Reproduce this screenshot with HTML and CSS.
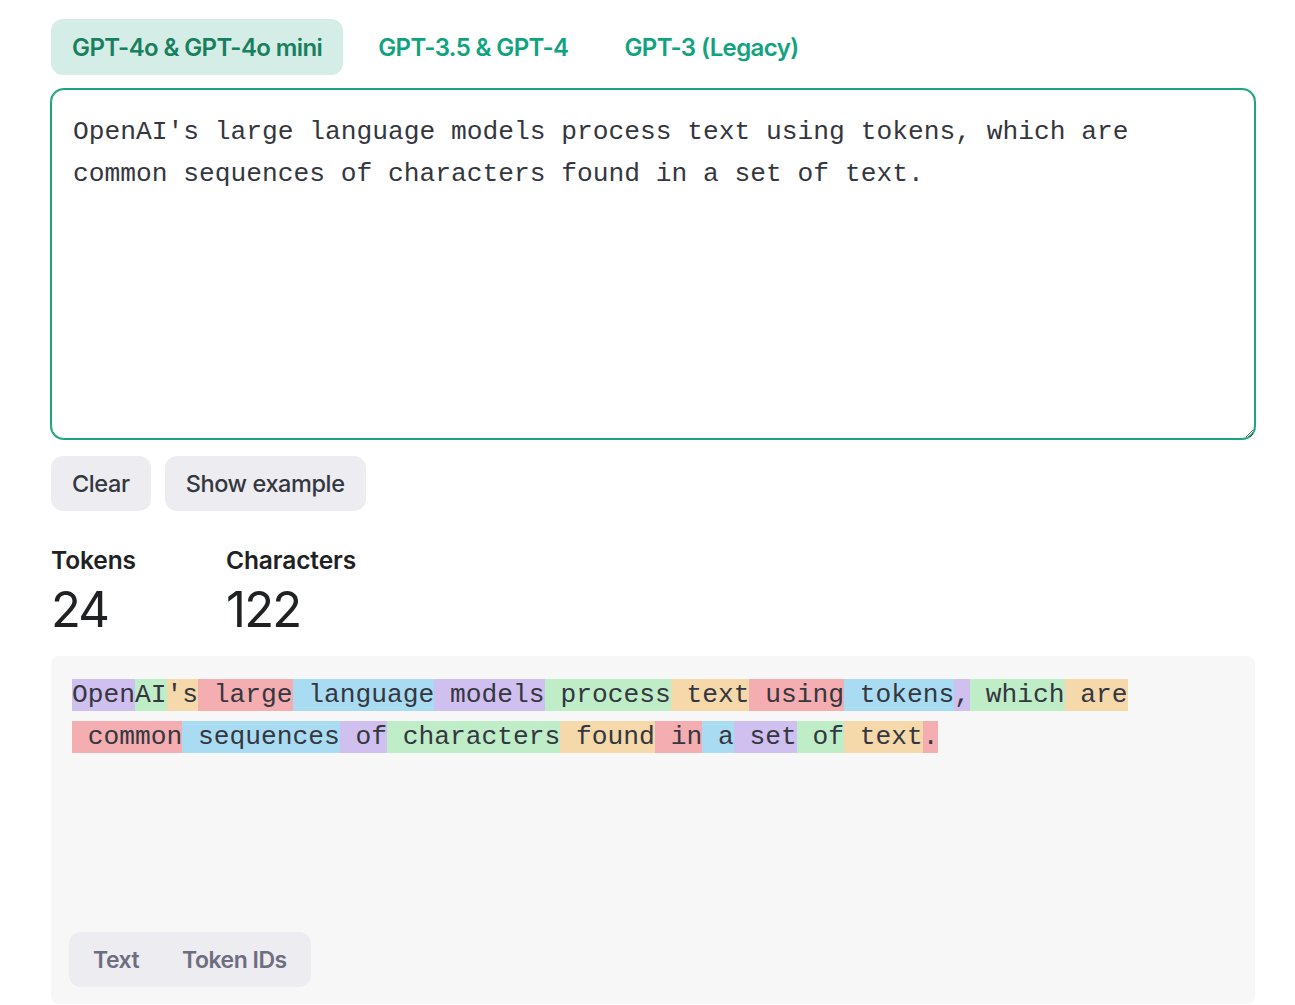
FILE: index.html
```html
<!DOCTYPE html>
<html lang="en">
<head>
<meta charset="utf-8">
<title>Tokenizer</title>
<link rel="stylesheet" href="styles.css">
</head>
<body>
<main class="page">
  <nav class="tabs">
    <button class="tab tab-active">GPT-4o &amp; GPT-4o mini</button>
    <button class="tab">GPT-3.5 &amp; GPT-4</button>
    <button class="tab">GPT-3 (Legacy)</button>
  </nav>

  <textarea class="input" spellcheck="false">OpenAI's large language models process text using tokens, which are common sequences of characters found in a set of text.</textarea>

  <div class="actions">
    <button class="btn">Clear</button>
    <button class="btn">Show example</button>
  </div>

  <section class="stats">
    <div class="stat">
      <div class="stat-label">Tokens</div>
      <div class="stat-value">24</div>
    </div>
    <div class="stat">
      <div class="stat-label">Characters</div>
      <div class="stat-value">122</div>
    </div>
  </section>

  <section class="output">
    <div class="tokens">
      <div class="token-line"><span class="t t-purple">Open</span><span class="t t-green">AI</span><span class="t t-orange">'s</span><span class="t t-red"> large</span><span class="t t-blue"> language</span><span class="t t-purple"> models</span><span class="t t-green"> process</span><span class="t t-orange"> text</span><span class="t t-red"> using</span><span class="t t-blue"> tokens</span><span class="t t-purple">,</span><span class="t t-green"> which</span><span class="t t-orange"> are</span></div>
      <div class="token-line"><span class="t t-red"> common</span><span class="t t-blue"> sequences</span><span class="t t-purple"> of</span><span class="t t-green"> characters</span><span class="t t-orange"> found</span><span class="t t-red"> in</span><span class="t t-blue"> a</span><span class="t t-purple"> set</span><span class="t t-green"> of</span><span class="t t-orange"> text</span><span class="t t-red">.</span></div>
    </div>
    <div class="toggle">
      <button class="toggle-btn">Text</button>
      <button class="toggle-btn">Token IDs</button>
    </div>
  </section>
</main>
</body>
</html>
```

FILE: styles.css
```css
* {
  box-sizing: border-box;
}

html, body {
  margin: 0;
  padding: 0;
  background: #ffffff;
}

body {
  font-family: Inter, "Noto Sans", "Liberation Sans", sans-serif;
  color: #202123;
}

button {
  font-family: inherit;
  border: none;
  cursor: pointer;
}

.page {
  padding: 19px 40px 0 51px;
}

/* Tabs */
.tabs {
  display: flex;
  gap: 14px;
}

.tab {
  height: 56px;
  padding: 0 21px;
  border-radius: 12px;
  background: transparent;
  color: #10a37f;
  font-size: 24px;
  font-weight: 600;
  letter-spacing: -0.6px;
}

.tab-active {
  background: #d4ede6;
  color: #1a7f5e;
}

/* Input */
.input {
  display: block;
  width: 100%;
  height: 350px;
  margin-top: 14px;
  padding: 21px 21px 19px;
  border: 1px solid #1fa57e;
  box-shadow: 0 0 0 1px #1fa57e;
  border-radius: 13px;
  outline: none;
  resize: both;
  font-family: "Liberation Mono", "DejaVu Sans Mono", monospace;
  font-size: 26.25px;
  line-height: 42px;
  color: #353740;
  background: #ffffff;
}

/* Buttons */
.actions {
  display: flex;
  gap: 14px;
  margin-top: 17px;
}

.btn {
  height: 55px;
  padding: 0 21px;
  border-radius: 12px;
  background: #ececf1;
  color: #353740;
  font-size: 23.5px;
  font-weight: 500;
  letter-spacing: -0.4px;
}

/* Stats */
.stats {
  display: grid;
  grid-template-columns: 175px auto;
  margin-top: 34px;
}

.stat-label {
  font-size: 24.5px;
  line-height: 30px;
  font-weight: 600;
  letter-spacing: -0.1px;
  color: #202123;
}

.stat-value {
  margin-top: 7px;
  font-size: 49px;
  line-height: 56px;
  font-weight: 400;
  letter-spacing: -1.8px;
  color: #202123;
}

/* Output */
.output {
  display: flex;
  flex-direction: column;
  height: 348px;
  margin-top: 18px;
  background: #f7f7f8;
  border-radius: 8px;
}

.tokens {
  flex: 1;
  padding: 18px 21px 0;
  font-family: "Liberation Mono", "DejaVu Sans Mono", monospace;
  font-size: 26.25px;
  line-height: 42px;
  color: #353740;
}

.token-line {
  white-space: pre;
}

.t {
  padding: 1px 0;
}

.t-purple { background: #d0c0ef; }
.t-green  { background: #beedc8; }
.t-orange { background: #f6d9aa; }
.t-red    { background: #f4aeb1; }
.t-blue   { background: #a9dcf2; }

.toggle {
  display: flex;
  align-self: flex-start;
  gap: 3px;
  margin: 0 0 17px 18px;
  padding: 4px;
  height: 55px;
  border-radius: 12px;
  background: #ececf1;
}

.toggle-btn {
  padding: 0 20px;
  border-radius: 9px;
  background: transparent;
  color: #6e6e80;
  font-size: 23px;
  font-weight: 600;
  letter-spacing: -0.5px;
}
```
